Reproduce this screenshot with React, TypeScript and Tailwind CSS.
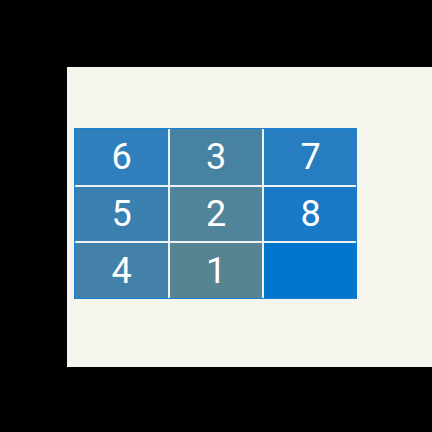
export default function App() {
  const cells: { v: string; c: string }[] = [
    { v: "6", c: "bg-[#2f80bd]" },
    { v: "3", c: "bg-[#4882a2]" },
    { v: "7", c: "bg-[#267dc0]" },
    { v: "5", c: "bg-[#3a81b2]" },
    { v: "2", c: "bg-[#50849a]" },
    { v: "8", c: "bg-[#1a7ac6]" },
    { v: "4", c: "bg-[#4381a8]" },
    { v: "1", c: "bg-[#568591]" },
    { v: "", c: "bg-[#0077cc]" },
  ];
  return (
    <div className="w-[432px] h-[432px] bg-black pt-[67px] pl-[67px]" style={{ fontFamily: "Roboto, sans-serif" }}>
      <div className="w-[365px] h-[300px] bg-[#f6f6ee] pt-[61px] pl-[7px]">
        <div className="w-[283px] h-[171px] border border-[#1a7fd0] bg-[#eef2f4] grid grid-cols-[93px_92px_93px] grid-rows-[56px_54px_55px] gap-[2px]">
          {cells.map((cell, i) => (
            <div key={i} className={`${cell.c} flex items-center justify-center text-white text-[36px] leading-none`}>
              {cell.v}
            </div>
          ))}
        </div>
      </div>
    </div>
  );
}
